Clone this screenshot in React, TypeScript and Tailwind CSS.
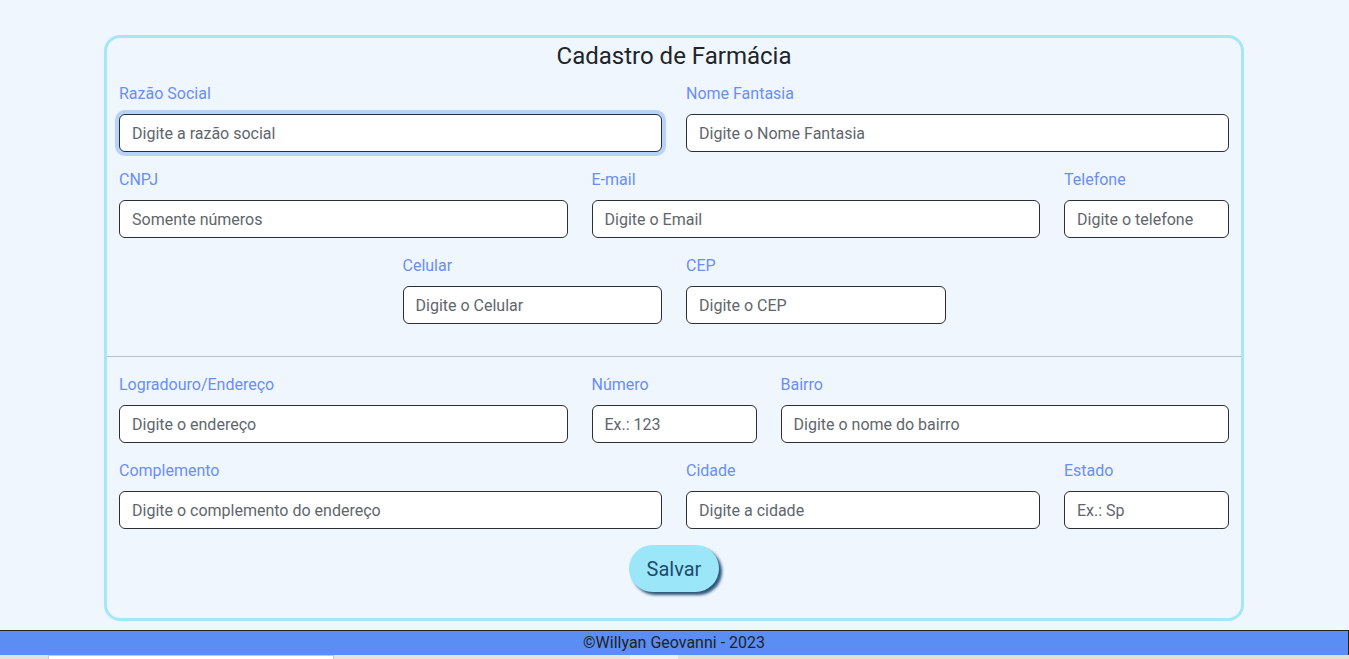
import React from "react";

/* -------------------------------------------------------------------------- */

type FieldProps = {
  label: string;
  placeholder: string;
  span: string;
  focused?: boolean;
};

const Field = ({ label, placeholder, span, focused }: FieldProps) => (
  <div className={span}>
    <label className="block pt-[1px] text-base leading-6 text-[#6b8ef5]">{label}</label>
    <input
      placeholder={placeholder}
      className={
        "mt-[8px] block h-[38px] w-full rounded-md border border-[#2b2f33] bg-white px-3 text-base text-[#212529] outline-none placeholder:text-[#5f666d] " +
        (focused ? "ring-4 ring-[#b7d3fa]" : "")
      }
    />
  </div>
);

const App = () => {
  return (
    <div
      className="flex min-h-screen flex-col bg-[#eff6fe]"
      style={{ fontFamily: "Roboto, 'Liberation Sans', sans-serif" }}
    >
      <main className="mt-[35px] ml-[104px] w-[1140px] rounded-2xl border-[3px] border-[#a2e8f8] pt-[4px] pb-[26px]">
        <h1 className="text-center text-2xl leading-[29px] text-[#212529]">
          Cadastro de Farmácia
        </h1>

        <div className="mt-[10px] grid grid-cols-12 gap-x-6 gap-y-[15px] px-3">
          <Field
            label="Razão Social"
            placeholder="Digite a razão social"
            span="col-span-6"
            focused
          />
          <Field label="Nome Fantasia" placeholder="Digite o Nome Fantasia" span="col-span-6" />

          <Field label="CNPJ" placeholder="Somente números" span="col-span-5" />
          <Field label="E-mail" placeholder="Digite o Email" span="col-span-5" />
          <Field label="Telefone" placeholder="Digite o telefone" span="col-span-2" />

          <Field label="Celular" placeholder="Digite o Celular" span="col-span-3 col-start-4" />
          <Field label="CEP" placeholder="Digite o CEP" span="col-span-3" />
        </div>

        <hr className="mt-[32px] border-t border-[#b9c3cb]" />

        <div className="mt-[15px] grid grid-cols-12 gap-x-6 gap-y-[15px] px-3">
          <Field
            label="Logradouro/Endereço"
            placeholder="Digite o endereço"
            span="col-span-5"
          />
          <Field label="Número" placeholder="Ex.: 123" span="col-span-2" />
          <Field label="Bairro" placeholder="Digite o nome do bairro" span="col-span-5" />

          <Field
            label="Complemento"
            placeholder="Digite o complemento do endereço"
            span="col-span-6"
          />
          <Field label="Cidade" placeholder="Digite a cidade" span="col-span-4" />
          <Field label="Estado" placeholder="Ex.: Sp" span="col-span-2" />
        </div>

        <div className="mt-[16px] flex justify-center">
          <button className="h-[47px] w-[90px] rounded-full bg-[#9ce6f9] text-xl text-[#1f4b6e] shadow-[3px_3px_3px_#2d5677]">
            Salvar
          </button>
        </div>
      </main>

      <footer className="mt-[9px] h-[25px] border-t border-r border-[#222] bg-[#5a8ef5] text-center text-base leading-6 text-[#222]">
        ©Willyan Geovanni - 2023
      </footer>

      <div className="flex h-[4px] bg-[#e6e2dc]">
        <div className="w-[48px] bg-[#dde3e0]" />
        <div className="w-[286px] border-x border-t border-[#c8c8c8] bg-white" />
        <div className="w-[296px]" />
        <div className="w-[48px] bg-[#f0f0f0]" />
        <div className="flex-1 bg-[#dfe2d2]" />
      </div>
    </div>
  );
};

export default App;
